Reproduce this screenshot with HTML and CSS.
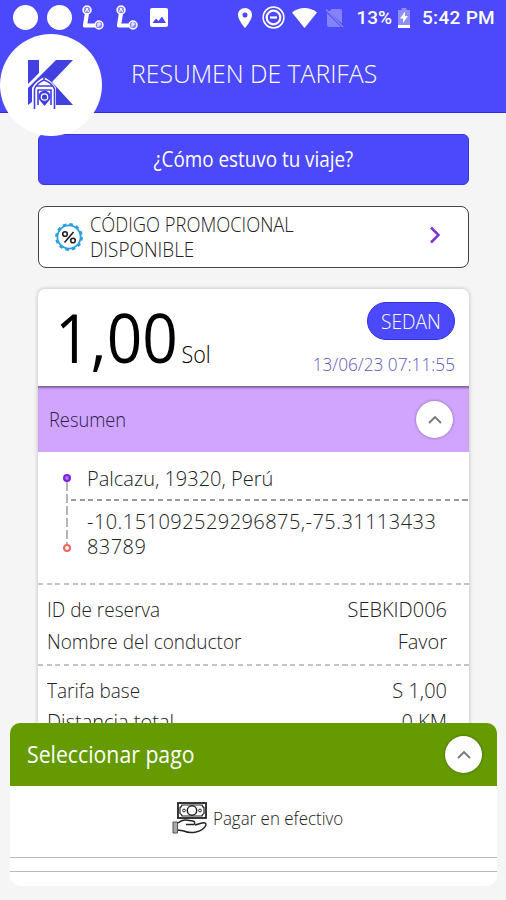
FILE: index.html
```html
<!DOCTYPE html>
<html lang="es">
<head>
  <meta charset="UTF-8">
  <meta name="viewport" content="width=device-width, initial-scale=1.0">
  <title>Resumen de tarifas</title>
  <link rel="stylesheet" href="styles.css">
</head>
<body>
  <div class="screen">
    <header class="header">
      <div class="status-bar">
        <div class="status-left">
          <span class="notif-dot"></span>
          <span class="notif-dot"></span>
          <svg class="route-icon" width="24" height="26" viewBox="0 0 24 26">
            <path d="M6 8 L4 20.500 H16" fill="none" stroke="#fff" stroke-width="4.200" stroke-linejoin="round"/>
            <circle cx="6" cy="5" r="4" fill="#8c8aff" stroke="#fff" stroke-width="1.500"/>
            <circle cx="18" cy="20" r="4" fill="#8c8aff" stroke="#fff" stroke-width="1.500"/>
            <path d="M4.500 7 L6 3 L7.500 7 M17 18 V22 M17 18 H19 V20 H17" fill="none" stroke="#fff" stroke-width="1"/>
          </svg>
          <svg class="route-icon" width="24" height="26" viewBox="0 0 24 26">
            <path d="M6 8 L4 20.500 H16" fill="none" stroke="#fff" stroke-width="4.200" stroke-linejoin="round"/>
            <circle cx="6" cy="5" r="4" fill="#8c8aff" stroke="#fff" stroke-width="1.500"/>
            <circle cx="18" cy="20" r="4" fill="#8c8aff" stroke="#fff" stroke-width="1.500"/>
            <path d="M4.500 7 L6 3 L7.500 7 M17 18 V22 M17 18 H19 V20 H17" fill="none" stroke="#fff" stroke-width="1"/>
          </svg>
          <svg class="image-icon" width="18" height="19" viewBox="0 0 18 19">
            <rect width="18" height="19" rx="2" fill="#fff"/>
            <path d="M2.500 15 L6 10.500 L8.500 13 L12 8.500 L16 15 Z" fill="#4b49fb"/>
          </svg>
        </div>
        <div class="status-right">
          <svg class="pin-icon" width="14" height="20" viewBox="0 0 14 20">
            <path d="M7 0 C3 0 0 3 0 7 C0 12 7 20 7 20 C7 20 14 12 14 7 C14 3 11 0 7 0 Z M7 4.500 A2.500 2.500 0 1 1 7 9.500 A2.500 2.500 0 1 1 7 4.500 Z" fill="#fff" fill-rule="evenodd"/>
          </svg>
          <svg class="dnd-icon" width="23" height="23" viewBox="0 0 23 23">
            <circle cx="11.500" cy="11.500" r="10.400" fill="none" stroke="#fff" stroke-width="1.500"/>
            <circle cx="11.500" cy="11.500" r="6.800" fill="none" stroke="#fff" stroke-width="2.200"/>
            <path d="M8 11.500 H15" stroke="#fff" stroke-width="2.200"/>
          </svg>
          <svg class="wifi-icon" width="25" height="20" viewBox="0 0 25 20">
            <path d="M0 4.500 C7 -1.500 18 -1.500 25 4.500 L12.500 20 Z" fill="#fff"/>
          </svg>
          <svg class="sim-icon" width="19" height="20" viewBox="0 0 19 20">
            <path d="M7 1 H15 Q17 1 17 3 V15.500 L3.500 3.500 Z M2 5 L16 19 H4 Q2 19 2 17 Z" fill="#8583fb"/>
            <path d="M1 1.500 L18 19" stroke="#8583fb" stroke-width="1.500"/>
          </svg>
          <span class="battery-level">13%</span>
          <svg class="battery-icon" width="12" height="20" viewBox="0 0 12 20">
            <path d="M3.500 2 V0 H8.500 V2 H12 V20 H0 V2 Z" fill="#8e8dfb"/>
            <path d="M0 17 H12 V20 H0 Z M7 3.500 L2 10.500 H5 V15 L10 8 H7 Z" fill="#fff"/>
          </svg>
          <span class="clock">5:42 PM</span>
        </div>
      </div>
      <h1>RESUMEN DE TARIFAS</h1>
      <div class="logo">
        <svg width="48" height="52" viewBox="0 0 48 52">
          <path d="M1 1 H12 V14 L1 25 Z" fill="#4340e0"/>
          <path d="M29 1 H46 L25 23 L46 46 H28 L16 34 L1 46 V29 Z" fill="#4340e0"/>
          <path d="M5 52 V29 Q8 23 17 18 Q26 23 29 29 V52 Z" fill="#fff"/>
          <path d="M7.500 50 V30 Q10 24 17 21 Q25 24 27.500 30 V50 M11 46 V31 H24 V46 M10 27 H25 M17 21 V18" fill="none" stroke="#4340e0" stroke-width="1.600"/>
          <path d="M17.500 47 L12.500 41 A6 6 0 1 1 22.500 41 Z" fill="#4340e0"/>
          <circle cx="17.500" cy="38" r="3.200" fill="none" stroke="#fff" stroke-width="1.200"/>
        </svg>
      </div>
    </header>

    <main class="content">
      <button class="rate-btn"><span>¿Cómo estuvo tu viaje?</span></button>

      <div class="promo">
        <svg class="promo-icon" width="30" height="30" viewBox="0 0 30 30">
          <circle cx="15" cy="15" r="11.600" fill="#fff" stroke="#2a9fe0" stroke-width="1.800"/>
          <circle cx="15" cy="15" r="12.800" fill="none" stroke="#2a9fe0" stroke-width="2.200" stroke-dasharray="3.600 3.102"/>
          <circle cx="11" cy="12" r="2.300" fill="none" stroke="#222" stroke-width="1.600"/>
          <circle cx="19" cy="18.500" r="2.300" fill="none" stroke="#222" stroke-width="1.600"/>
          <path d="M19.500 10 L10.500 20.500" stroke="#222" stroke-width="1.600"/>
        </svg>
        <div class="promo-text">
          <p class="promo-title">CÓDIGO PROMOCIONAL</p>
          <p class="promo-sub">DISPONIBLE</p>
        </div>
        <svg class="promo-arrow" width="12" height="18" viewBox="0 0 12 18">
          <path d="M2 1.500 L9.500 9 L2 16.500" fill="none" stroke="#8430d8" stroke-width="2.500"/>
        </svg>
      </div>

      <section class="card">
        <div class="fare">
          <div class="price"><span class="amount">1,00</span><span class="currency">Sol</span></div>
          <div class="fare-info">
            <span class="badge"><span>SEDAN</span></span>
            <span class="date">13/06/23 07:11:55</span>
          </div>
        </div>
        <div class="summary-head">
          <h2>Resumen</h2>
          <span class="toggle">
            <svg width="14" height="9" viewBox="0 0 14 9"><path d="M1 8 L7 2 L13 8" fill="none" stroke="#777" stroke-width="1.800"/></svg>
          </span>
        </div>
        <div class="route">
          <div class="route-track">
            <span class="stop start"></span>
            <span class="track-line"></span>
            <span class="stop end"></span>
          </div>
          <div class="route-text">
            <p class="origin">Palcazu, 19320, Perú</p>
            <p class="destination">-10.151092529296875,-75.31113433<br>83789</p>
          </div>
        </div>
        <div class="rows">
          <div class="row"><span class="label">ID de reserva</span><span>SEBKID006</span></div>
          <div class="row"><span class="label">Nombre del conductor</span><span>Favor</span></div>
        </div>
        <div class="rows">
          <div class="row"><span class="label">Tarifa base</span><span>S 1,00</span></div>
          <div class="row last"><span>Distancia total</span><span>0 KM</span></div>
        </div>
      </section>
    </main>

    <section class="payment">
      <div class="payment-head">
        <h2>Seleccionar pago</h2>
        <span class="toggle">
          <svg width="14" height="9" viewBox="0 0 14 9"><path d="M1 8 L7 2 L13 8" fill="none" stroke="#777" stroke-width="1.800"/></svg>
        </span>
      </div>
      <div class="cash">
        <svg width="36" height="34" viewBox="0 0 36 34">
          <rect x="6" y="2" width="28" height="15" fill="#fff" stroke="#222" stroke-width="1.800"/>
          <path d="M10 4 Q9.500 6 8 6.500 V12.500 Q9.500 13 10 15 H30 Q30.500 13 32 12.500 V6.500 Q30.500 6 30 4 Z" fill="none" stroke="#222" stroke-width="1.200"/>
          <circle cx="20" cy="9.500" r="4.700" fill="none" stroke="#222" stroke-width="1.500"/>
          <circle cx="12" cy="9.500" r="1.400" fill="none" stroke="#222"/>
          <circle cx="28" cy="9.500" r="1.400" fill="none" stroke="#222"/>
          <path d="M1 21 H5.500 V32 H1 Z" fill="#aaa" stroke="#555"/>
          <path d="M6 22 Q10 18.500 14 19 L21 20 Q24 21 22 23.500 H14 M23 24 L30 22 Q34 21 34 24 Q32 29 24 31 Q17 32.500 12 30 L6 29" fill="none" stroke="#222" stroke-width="1.400"/>
        </svg>
        <span>Pagar en efectivo</span>
      </div>
      <div class="payment-gap"></div>
      <div class="payment-foot"></div>
    </section>
  </div>
</body>
</html>
```
FILE: styles.css
```css
* {
  box-sizing: border-box;
}
body {
  margin: 0;
  font-family: 'Open Sans', 'Noto Sans', sans-serif;
  font-weight: 300;
  background: #f5f5f5;
  color: #222;
}
h1, h2, p {
  margin: 0;
  font-weight: 300;
}
svg {
  display: block;
  flex: none;
}
span {
  white-space: nowrap;
}
.screen {
  display: flex;
  flex-direction: column;
  width: 506px;
  height: 900px;
  padding-bottom: 14px;
  overflow: hidden;
}

/* header */
.header {
  position: relative;
  flex: none;
  height: 113px;
  background: #4b49fb;
  border-bottom: 1px solid #302bd8;
  color: #fff;
}
.status-bar {
  display: flex;
  justify-content: space-between;
  height: 35px;
  padding: 0 11px 0 13px;
  font-family: Roboto, sans-serif;
  font-size: 19px;
  font-weight: 500;
}
.status-left, .status-right {
  display: flex;
  align-items: center;
}
.notif-dot {
  width: 25px;
  height: 25px;
  margin-right: 9px;
  border-radius: 50%;
  background: #fff;
}
.route-icon {
  margin: 0 10px 0 0;
}
.image-icon {
  margin-left: 1px;
}
.dnd-icon {
  margin-left: 10px;
}
.wifi-icon {
  margin-left: 7px;
}
.sim-icon {
  margin-left: 8px;
}
.battery-level {
  margin-left: 12px;
}
.battery-icon {
  margin-left: 6px;
}
.clock {
  margin-left: 12px;
  letter-spacing: 0.300px;
}
.header h1 {
  width: max-content;
  margin: 20px 0 0 131px;
  font-size: 26px;
  line-height: 36px;
  transform: scaleX(0.952);
  transform-origin: left;
}
.logo {
  position: absolute;
  left: 0;
  top: 34px;
  z-index: 1;
  display: flex;
  align-items: center;
  justify-content: center;
  width: 102px;
  height: 102px;
  border-radius: 50%;
  background: #fff;
}

/* content */
.content {
  flex: 1;
  min-height: 0;
  padding: 21px 37px 0 38px;
  overflow: hidden;
}
.rate-btn {
  display: block;
  width: 100%;
  height: 51px;
  padding: 0 0 2px;
  border: 1px solid #3935e6;
  border-radius: 6px;
  background: #4b49fb;
  color: #fff;
  font: inherit;
  font-size: 21px;
  font-weight: 400;
}
.rate-btn span {
  display: inline-block;
  transform: scaleX(0.897);
}
.promo {
  display: flex;
  align-items: center;
  height: 62px;
  margin-top: 21px;
  padding: 0 27px 0 15px;
  border: 1.500px solid #444;
  border-radius: 8px;
  background: #fff;
}
.promo-text {
  flex: 1;
  margin-left: 6px;
  font-size: 20px;
  line-height: 25px;
}
.promo-title, .promo-sub {
  transform-origin: left;
}
.promo-title {
  transform: scaleX(0.915);
}
.promo-sub {
  transform: scaleX(0.945);
}
.promo-arrow {
  margin-bottom: 4px;
}
.card {
  margin-top: 21px;
  height: 480px;
  border-radius: 7px 7px 0 0;
  background: #fff;
  box-shadow: 0 0 4px rgba(0, 0, 0, 0.25);
}
.fare {
  display: flex;
  justify-content: space-between;
  height: 97px;
  padding: 13px 14px 0 17px;
}
.price {
  display: flex;
  align-items: baseline;
  height: 76px;
  margin-top: -3px;
  color: #000;
  transform: scaleX(0.915);
  transform-origin: left;
}
.amount {
  font-size: 68px;
  line-height: 76px;
  font-weight: 400;
}
.currency {
  margin-left: 4px;
  font-size: 23.500px;
}
.fare-info {
  display: flex;
  flex-direction: column;
  align-items: flex-end;
}
.badge {
  width: 88px;
  height: 38px;
  border: 1px solid #3430e0;
  border-radius: 19px;
  background: #4b49fb;
  color: #fff;
  font-size: 21px;
  line-height: 36px;
  text-align: center;
}
.badge span {
  display: inline-block;
  transform: scaleX(0.91);
}
.date {
  margin-top: 12px;
  color: #5b58b8;
  font-size: 18.500px;
  line-height: 24px;
  transform: scaleX(0.93);
  transform-origin: right;
}
.summary-head {
  display: flex;
  align-items: center;
  justify-content: space-between;
  height: 66px;
  padding: 0 16px 0 11px;
  background: #d1a5fe;
  box-shadow: inset 0 3px 2px -1px #8168a0;
}
.summary-head h2 {
  color: #262150;
  font-size: 21px;
  transform: scaleX(0.87);
  transform-origin: left;
}
.toggle {
  display: flex;
  align-items: center;
  justify-content: center;
  width: 37px;
  height: 37px;
  border-radius: 50%;
  background: #fff;
  box-shadow: 0 0 3px rgba(0, 0, 0, 0.4);
}
.route {
  display: flex;
  height: 131px;
}
.route-track {
  display: flex;
  flex-direction: column;
  align-items: center;
  width: 8px;
  margin: 22px 0 0 25px;
}
.stop {
  width: 8px;
  height: 8px;
  border-radius: 50%;
}
.start {
  border: 2.500px solid #7d20dc;
  background: #b070f0;
}
.end {
  border: 2px solid #f0645c;
}
.track-line {
  width: 2px;
  height: 62px;
  background: repeating-linear-gradient(#b5b5b5 0 9px, transparent 9px 12px);
}
.route-text {
  flex: 1;
  font-size: 20px;
}
.origin {
  height: 49px;
  padding-left: 16px;
  background: repeating-linear-gradient(90deg, #999 0 5px, transparent 5px 8.700px) bottom / 100% 2px no-repeat;
  line-height: 53px;
}
.destination {
  padding: 8px 0 0 16px;
  line-height: 25px;
  letter-spacing: 0.450px;
  white-space: nowrap;
}
.rows {
  height: 81px;
  padding: 10px 22px 0 9px;
  background: repeating-linear-gradient(90deg, #c4c4c4 0 5px, transparent 5px 8.700px) top / 100% 2px no-repeat;
  font-size: 20px;
}
.row {
  display: flex;
  justify-content: space-between;
  height: 32px;
  line-height: 33px;
}
.label {
  transform: scaleX(0.95);
  transform-origin: left;
}
.last {
  margin-top: -1px;
}

/* payment sheet */
.payment {
  display: flex;
  flex-direction: column;
  flex: none;
  height: 163px;
  margin: 0 9px 0 10px;
  border-radius: 10px;
  background: #fff;
  overflow: hidden;
}
.payment-head {
  display: flex;
  align-items: center;
  justify-content: space-between;
  height: 63px;
  padding: 0 15px 0 17px;
  background: #659b00;
}
.payment-head h2 {
  margin-top: -2px;
  color: #fff;
  font-size: 24px;
  font-weight: 400;
  transform: scaleX(0.885);
  transform-origin: left;
}
.cash {
  display: flex;
  align-items: center;
  gap: 5px;
  height: 72px;
  padding: 0 0 8px 162px;
  border-bottom: 1px solid #b5b9b9;
  font-size: 18px;
}
.cash span {
  transform: scaleX(0.94);
  transform-origin: left;
}
.payment-gap {
  height: 14px;
  border-bottom: 1px solid #b5b9b9;
}
```
